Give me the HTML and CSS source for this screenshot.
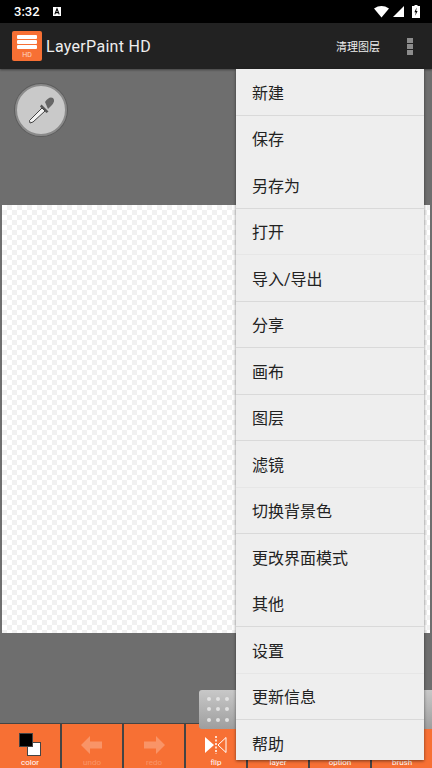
FILE: index.html
```html
<!DOCTYPE html>
<html lang="zh-CN">
<head>
    <meta charset="UTF-8">
    <meta name="viewport" content="width=device-width, initial-scale=1.0">
    <title>LayerPaint HD</title>
    <link rel="stylesheet" href="styles.css">
</head>
<body>
    <div class="statusbar">
        <span class="clock">3:32</span>
        <svg class="notif" width="10" height="10" viewBox="0 0 10 10">
            <rect x="0" y="0" width="8" height="9" fill="#fff"/>
            <path d="M1.8 7.4 L4 1.8 L6.2 7.4 M2.7 5.6 H5.3" fill="none" stroke="#000" stroke-width="1.1"/>
        </svg>
        <div class="status-icons">
            <svg width="15" height="12" viewBox="0 0 15 12"><path d="M0 2.4 Q7.5 -2.4 15 2.4 L7.5 11.6 Z" fill="#fff"/></svg>
            <svg width="11" height="11" viewBox="0 0 11 11"><path d="M11 0 V11 H0 Z" fill="#fff"/></svg>
            <svg class="battery" width="8" height="13" viewBox="0 0 8 13">
                <path d="M2.5 0 H5.5 V1 H8 V13 H0 V1 H2.5 Z" fill="#fff"/>
                <path d="M4.6 2.5 L2.4 7.2 H3.8 L3.2 10.8 L5.6 6 H4.2 Z" fill="#000"/>
            </svg>
        </div>
    </div>

    <div class="appbar">
        <div class="logo">
            <span class="logo-bar"></span>
            <span class="logo-bar"></span>
            <span class="logo-bar"></span>
            <span class="logo-hd">HD</span>
        </div>
        <span class="app-title">LayerPaint HD</span>
        <span class="app-action">清理图层</span>
        <div class="overflow">
            <span></span><span></span><span></span>
        </div>
    </div>

    <div class="workspace">
        <div class="picker">
            <svg width="34" height="34" viewBox="0 0 34 34">
                <path d="M21 9 Q25 3 29 5 Q32 8 27 13 L24 16 Z" fill="#666"/>
                <path d="M17.5 11.5 L24.5 18.5 L22.5 20 L16 13.5 Z" fill="#555"/>
                <path d="M18 15 L21 18 L9 29 L6 30 L5.5 27.5 Z" fill="#f2f2f2" stroke="#444" stroke-width="1"/>
            </svg>
        </div>
        <div class="canvas"></div>
    </div>

    <div class="toolbar">
        <div class="tool">
            <div class="swatch"><span class="swatch-back"></span><span class="swatch-front"></span></div>
            <span class="tool-label">color</span>
        </div>
        <div class="tool dim">
            <svg width="22" height="18" viewBox="0 0 22 18"><path d="M0 9 L9 0 V5.5 H21 V12.5 H9 V18 Z" fill="#fff"/></svg>
            <span class="tool-label">undo</span>
        </div>
        <div class="tool dim">
            <svg width="22" height="18" viewBox="0 0 22 18"><path d="M22 9 L13 0 V5.5 H1 V12.5 H13 V18 Z" fill="#fff"/></svg>
            <span class="tool-label">redo</span>
        </div>
        <div class="tool">
            <svg width="22" height="18" viewBox="0 0 22 18">
                <path d="M0 1 L9 9 L0 17 Z" fill="#fff"/>
                <path d="M21 1.5 L13 9 L21 16.5 Z" fill="none" stroke="#fff" stroke-width="1"/>
                <path d="M11 0 V18" stroke="#fff" stroke-width="1.5" stroke-dasharray="2 1.5"/>
            </svg>
            <span class="tool-label">flip</span>
        </div>
        <div class="tool"><span class="tool-label">layer</span></div>
        <div class="tool"><span class="tool-label">option</span></div>
        <div class="tool"><span class="tool-label">brush</span></div>
    </div>

    <div class="grip grip-left">
        <span></span><span></span><span></span>
        <span></span><span></span><span></span>
        <span></span><span></span><span></span>
    </div>
    <div class="grip grip-right">
        <span></span><span></span><span></span>
        <span></span><span></span><span></span>
        <span></span><span></span><span></span>
    </div>

    <ul class="menu">
        <li>新建</li>
        <li class="no-line">保存</li>
        <li>另存为</li>
        <li class="faint">打开</li>
        <li>导入/导出</li>
        <li>分享</li>
        <li>画布</li>
        <li>图层</li>
        <li class="faint">滤镜</li>
        <li>切换背景色</li>
        <li class="no-line">更改界面模式</li>
        <li>其他</li>
        <li class="faint">设置</li>
        <li>更新信息</li>
        <li class="no-line">帮助</li>
    </ul>
</body>
</html>
```

FILE: styles.css
```css
* {
    box-sizing: border-box;
}

body {
    margin: 0;
    width: 432px;
    height: 768px;
    overflow: hidden;
    position: relative;
    display: flex;
    flex-direction: column;
    background-color: #6e6e6e;
    font-family: Roboto, "Noto Sans CJK SC", sans-serif;
}

.statusbar {
    height: 23px;
    flex: none;
    display: flex;
    align-items: center;
    padding: 0 12px 0 14px;
    background-color: #000;
    color: #fff;
}

.clock {
    font-size: 13px;
    font-weight: 500;
}

.notif {
    margin-left: 13px;
}

.status-icons {
    margin-left: auto;
    display: flex;
    align-items: center;
    gap: 4px;
}

.status-icons .battery {
    margin-left: 4px;
}

.appbar {
    height: 46px;
    flex: none;
    display: flex;
    align-items: center;
    background-color: #222;
    color: #eee;
    padding-left: 12px;
    box-shadow: 0 1px 2px rgba(0, 0, 0, 0.4);
    z-index: 1;
}

.logo {
    width: 30px;
    height: 30px;
    background-color: #f77034;
    border-radius: 2px;
    display: flex;
    flex-direction: column;
    align-items: center;
    padding-top: 4px;
    gap: 1px;
}

.logo-bar {
    width: 20px;
    height: 4px;
    background-color: #fff;
    border-radius: 1px;
}

.logo-hd {
    font-size: 7px;
    line-height: 8px;
    margin-top: 1px;
    color: #ffd9c6;
}

.app-title {
    margin-left: 4px;
    font-size: 16px;
    letter-spacing: 0.3px;
}

.app-action {
    margin-left: auto;
    font-size: 11px;
    color: #eee;
}

.overflow {
    margin: 0 19px 0 27px;
    display: flex;
    flex-direction: column;
    gap: 1px;
}

.overflow span {
    width: 6px;
    height: 5px;
    background-color: #8c8c8c;
}

.workspace {
    flex: 1;
    display: flex;
    flex-direction: column;
    padding: 15px 2px 90px;
    background-color: #6e6e6e;
}

.picker {
    width: 52px;
    height: 52px;
    margin-left: 13px;
    border-radius: 50%;
    background-color: #c9c9c9;
    border: 2px solid #8a8a8a;
    box-shadow: 0 0 0 1px #5c5c5c;
    display: flex;
    align-items: center;
    justify-content: center;
}

.canvas {
    margin-top: 69px;
    height: 428px;
    background-color: #fff;
    background-image: repeating-conic-gradient(#f1f1f1 0 25%, #fff 0 50%);
    background-size: 10px 10px;
}

.toolbar {
    height: 46px;
    flex: none;
    display: flex;
    gap: 2px;
    background-color: #444;
    padding-top: 1px;
}

.tool {
    flex: 1;
    display: flex;
    flex-direction: column;
    align-items: center;
    justify-content: flex-end;
    background-color: #f77034;
    color: #fff;
}

.tool.dim svg,
.tool.dim .tool-label {
    opacity: 0.25;
}

.tool svg {
    margin-bottom: 3px;
}

.tool-label {
    font-size: 8px;
    line-height: 11px;
    height: 12px;
}

.swatch {
    width: 22px;
    height: 23px;
    position: relative;
    margin-bottom: 1px;
}

.swatch-front {
    position: absolute;
    left: 0;
    top: 0;
    width: 14px;
    height: 14px;
    background-color: #000;
    border: 1px solid #444;
}

.swatch-back {
    position: absolute;
    right: 0;
    bottom: 0;
    width: 14px;
    height: 14px;
    background-color: #fff;
    border: 1px solid #444;
}

.grip {
    position: absolute;
    top: 690px;
    width: 38px;
    height: 39px;
    padding: 4px 5px;
    display: grid;
    grid-template-columns: repeat(3, 1fr);
    align-items: center;
    justify-items: center;
    border-radius: 3px 0 0 3px;
    background: linear-gradient(to bottom, #c8c8c8, #9e9e9e);
}

.grip span {
    width: 4px;
    height: 4px;
    border-radius: 50%;
    background-color: #e2e2e2;
}

.grip-left {
    left: 199px;
}

.grip-right {
    left: 394px;
}

.menu {
    position: absolute;
    left: 236px;
    top: 69px;
    width: 188px;
    height: 691px;
    margin: 0;
    padding: 0;
    list-style: none;
    background-color: #eee;
    box-shadow: 0 1px 3px rgba(0, 0, 0, 0.5);
    z-index: 2;
}

.menu li {
    height: 46.5px;
    padding: 0 16px;
    display: flex;
    align-items: center;
    font-size: 16px;
    color: #222;
    border-bottom: 1px solid #d9d9d9;
}

.menu li.faint {
    border-bottom-color: #e6e6e6;
}

.menu li.no-line {
    border-bottom-color: transparent;
}
```
